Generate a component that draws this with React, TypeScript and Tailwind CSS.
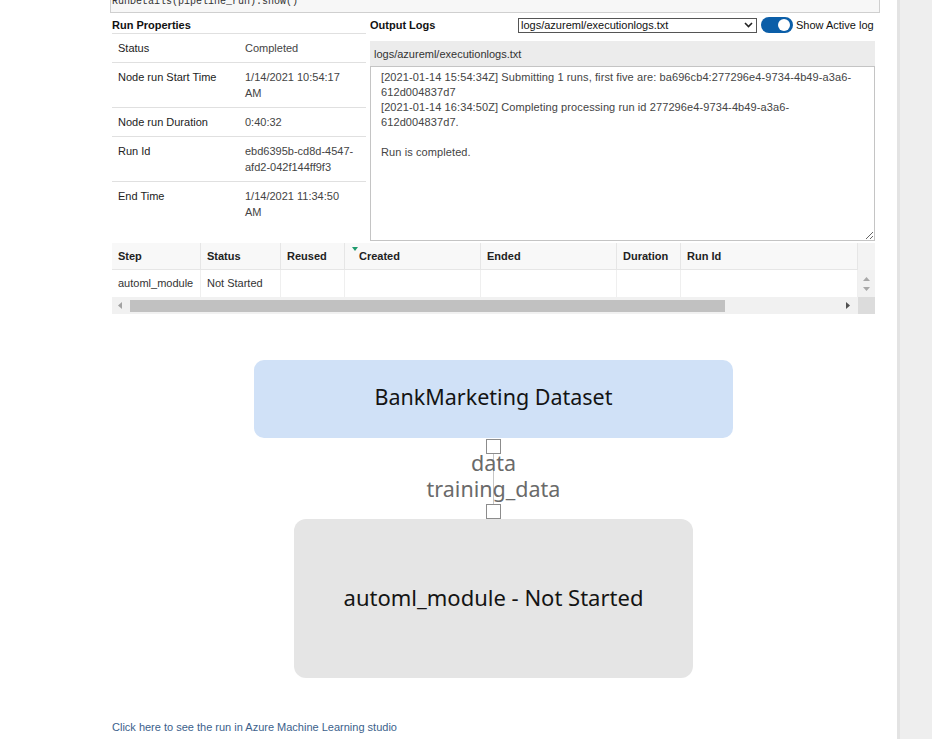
import React from "react";

const props: { label: string; value: string }[] = [
  { label: "Status", value: "Completed" },
  { label: "Node run Start Time", value: "1/14/2021 10:54:17 AM" },
  { label: "Node run Duration", value: "0:40:32" },
  { label: "Run Id", value: "ebd6395b-cd8d-4547-afd2-042f144ff9f3" },
  { label: "End Time", value: "1/14/2021 11:34:50 AM" },
];

const columns: { name: string; width: string; sorted?: boolean }[] = [
  { name: "Step", width: "w-[89px]" },
  { name: "Status", width: "w-[80px]" },
  { name: "Reused", width: "w-[64px]" },
  { name: "Created", width: "w-[136px]", sorted: true },
  { name: "Ended", width: "w-[136px]" },
  { name: "Duration", width: "w-[64px]" },
  { name: "Run Id", width: "w-[177px]" },
];

const row = ["automl_module", "Not Started", "", "", "", "", ""];

const logText =
  "[2021-01-14 15:54:34Z] Submitting 1 runs, first five are: ba696cb4:277296e4-9734-4b49-a3a6-\n612d004837d7\n[2021-01-14 16:34:50Z] Completing processing run id 277296e4-9734-4b49-a3a6-\n612d004837d7.\n\nRun is completed.";

function RunProperties() {
  return (
    <div className="w-[254px]">
      <div className="h-[21px] pt-[4px] border-b border-[#e0e0e0] font-bold text-[#111]">Run Properties</div>
      {props.map((p, i) => (
        <div
          key={p.label}
          className={`flex py-[6px] ${i < props.length - 1 ? "border-b border-[#e0e0e0]" : ""}`}
        >
          <div className="w-[127px] pl-[6px] text-[#222]">{p.label}</div>
          <div className="w-[127px] pl-[6px] pr-[10px] text-[#444]">{p.value}</div>
        </div>
      ))}
    </div>
  );
}

function OutputLogs() {
  return (
    <div className="w-[505px]">
      <div className="pt-[4px]">
        <div className="flex h-[16px] items-center">
          <div className="w-[148px] font-bold text-[#111]">Output Logs</div>
          <div className="flex h-[15px] w-[239px] items-center justify-between border border-[#555] bg-white pl-[2px] pr-[3px] text-[#111]">
            <span>logs/azureml/executionlogs.txt</span>
            <svg width="9" height="6" viewBox="0 0 9 6">
              <path d="M1 1l3.5 3.5L8 1" fill="none" stroke="#222" strokeWidth="1.6" />
            </svg>
          </div>
          <div className="ml-[4px] flex h-[16px] w-[32px] items-center justify-end rounded-full bg-[#0b5ea8] pr-[3px]">
            <div className="h-[12px] w-[12px] rounded-full bg-white" />
          </div>
          <span className="ml-[3px] text-[#111]">Show Active log</span>
        </div>
      </div>
      <div className="mt-[8px] flex h-[25px] items-center bg-[#ececec] pl-[4px] text-[#333]">
        logs/azureml/executionlogs.txt
      </div>
      <textarea
        readOnly
        wrap="off"
        defaultValue={logText}
        className="block h-[175px] w-full resize-y overflow-hidden border border-[#c4c4c4] bg-white px-[10px] pt-[3px] font-['Liberation_Sans',Arial,sans-serif] text-[11px] leading-[15px] tracking-[0.1px] text-[#444] outline-none"
      />
    </div>
  );
}

function StepTable() {
  return (
    <div className="mt-[2px] w-[763px]">
      <div className="flex">
        <div className="w-[746px]">
          <div className="flex h-[27px] border-b border-[#e6e6e6] bg-[#f8f8f8]">
            {columns.map((c) => (
              <div
                key={c.name}
                className={`${c.width} relative flex items-center border-r border-[#e6e6e6] pl-[6px] font-bold text-[#222]`}
              >
                {c.sorted && (
                  <svg className="absolute left-[7px] top-[4px]" width="6" height="4" viewBox="0 0 6 4">
                    <path d="M0 0h6L3 4z" fill="#1f9b6e" />
                  </svg>
                )}
                <span className={c.sorted ? "pl-[8px]" : ""}>{c.name}</span>
              </div>
            ))}
          </div>
          <div className="flex h-[27px] bg-white">
            {columns.map((c, i) => (
              <div
                key={c.name}
                className={`${c.width} flex items-center border-r border-[#efefef] pb-[1px] pl-[6px] text-[#333]`}
              >
                {row[i]}
              </div>
            ))}
          </div>
        </div>
        <div className="flex w-[17px] flex-col bg-[#f3f3f3]">
          <div className="h-[27px]" />
          <div className="flex h-[27px] flex-col items-center justify-center gap-[6px] bg-[#f1f1f1]">
            <svg width="7" height="4" viewBox="0 0 7 4">
              <path d="M0 4L3.5 0 7 4z" fill="#a8a8a8" />
            </svg>
            <svg width="7" height="4" viewBox="0 0 7 4">
              <path d="M0 0h7L3.5 4z" fill="#a8a8a8" />
            </svg>
          </div>
        </div>
      </div>
      <div className="flex h-[17px]">
        <div className="flex w-[746px] items-center bg-[#f1f1f1]">
          <svg className="ml-[6px]" width="4" height="7" viewBox="0 0 4 7">
            <path d="M4 0v7L0 3.5z" fill="#a3a3a3" />
          </svg>
          <div className="ml-[8px] h-[12px] w-[595px] bg-[#c1c1c1]" />
          <div className="flex-1" />
          <svg className="mr-[8px]" width="4" height="7" viewBox="0 0 4 7">
            <path d="M0 0v7L4 3.5z" fill="#505050" />
          </svg>
        </div>
        <div className="w-[17px] bg-[#dcdcdc]" />
      </div>
    </div>
  );
}

function Port() {
  return <div className="h-[15px] w-[15px] border border-[#8c8c8c] bg-white" />;
}

function PipelineGraph() {
  return (
    <div className="mt-[46px] flex flex-col items-center font-['Noto_Sans','Open_Sans',sans-serif]">
      <div className="flex h-[78px] w-[479px] items-center justify-center rounded-[10px] bg-[#d0e1f7] pb-[4px] text-[21.5px] text-[#141414]">
        BankMarketing Dataset
      </div>
      <div className="mt-[1px]">
        <Port />
      </div>
      <div className="relative flex h-[50px] flex-col items-center text-[21.5px] leading-[26px] text-[#6a6a6a]">
        <div className="absolute left-1/2 top-0 h-full w-px bg-[#c6c6c6]" />
        <span className="relative -mt-[4px]">data</span>
        <span className="relative">training_data</span>
      </div>
      <Port />
      <div className="flex h-[159px] w-[399px] items-center justify-center rounded-[12px] bg-[#e5e5e5] pb-[4px] text-[22px] text-[#141414]">
        automl_module - Not Started
      </div>
    </div>
  );
}

export default function App() {
  return (
    <div className="flex h-[739px] overflow-hidden bg-white font-['Liberation_Sans',Arial,sans-serif] text-[11px] leading-[16px]">
      <div className="w-[897px] shrink-0">
        <div className="-mt-[10px] ml-[110px] h-[23px] w-[770px] border border-[#cfcfcf] bg-[#f7f7f7] pl-[1px] pt-[5px] font-['Liberation_Mono','DejaVu_Sans_Mono',monospace] text-[10px] leading-[12px] text-[#333]">
          RunDetails(pipeline_run).show()
        </div>
        <div className="ml-[112px] w-[763px]">
          <div className="flex gap-[4px]">
            <RunProperties />
            <OutputLogs />
          </div>
          <StepTable />
          <PipelineGraph />
          <a href="#" className="mt-[41px] block text-[#3c5f8c]">
            Click here to see the run in Azure Machine Learning studio
          </a>
        </div>
      </div>
      <div className="flex-1 border-l-[3px] border-[#e3e3e3] bg-[#eeeeee]" />
    </div>
  );
}
